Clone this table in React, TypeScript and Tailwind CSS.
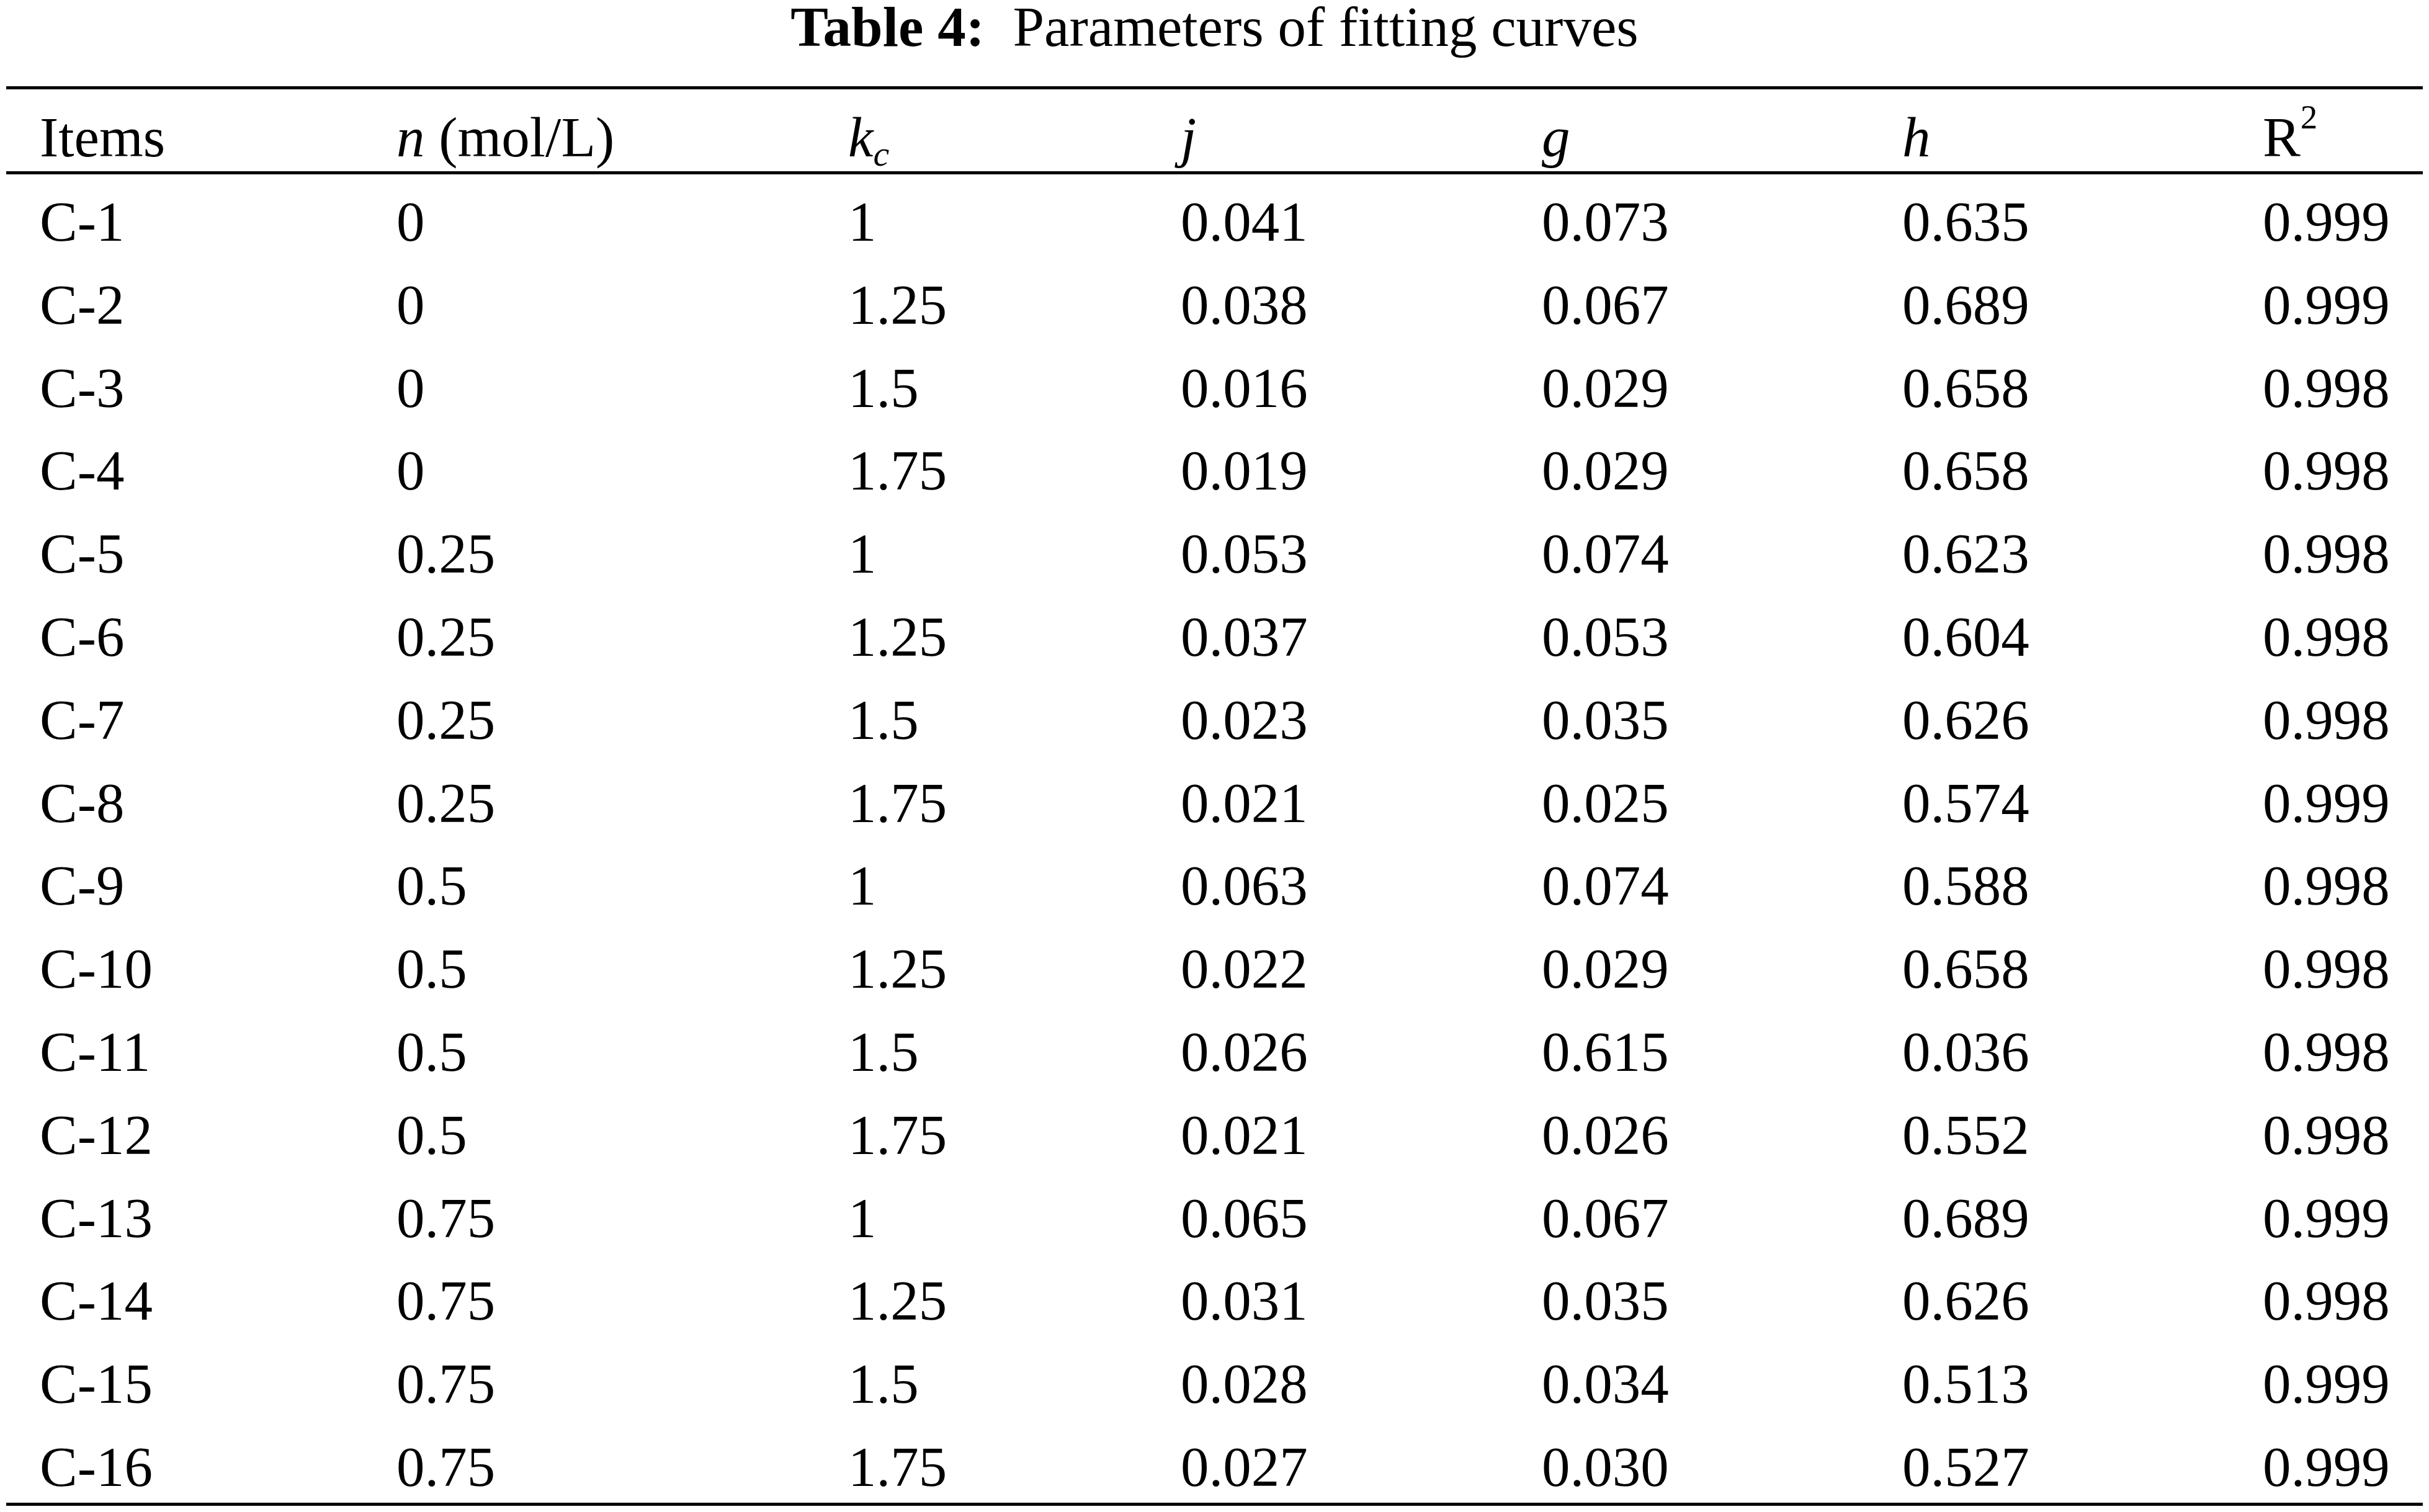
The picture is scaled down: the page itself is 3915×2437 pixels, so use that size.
import React from "react";

const rows: string[][] = [
  ["C-1", "0", "1", "0.041", "0.073", "0.635", "0.999"],
  ["C-2", "0", "1.25", "0.038", "0.067", "0.689", "0.999"],
  ["C-3", "0", "1.5", "0.016", "0.029", "0.658", "0.998"],
  ["C-4", "0", "1.75", "0.019", "0.029", "0.658", "0.998"],
  ["C-5", "0.25", "1", "0.053", "0.074", "0.623", "0.998"],
  ["C-6", "0.25", "1.25", "0.037", "0.053", "0.604", "0.998"],
  ["C-7", "0.25", "1.5", "0.023", "0.035", "0.626", "0.998"],
  ["C-8", "0.25", "1.75", "0.021", "0.025", "0.574", "0.999"],
  ["C-9", "0.5", "1", "0.063", "0.074", "0.588", "0.998"],
  ["C-10", "0.5", "1.25", "0.022", "0.029", "0.658", "0.998"],
  ["C-11", "0.5", "1.5", "0.026", "0.615", "0.036", "0.998"],
  ["C-12", "0.5", "1.75", "0.021", "0.026", "0.552", "0.998"],
  ["C-13", "0.75", "1", "0.065", "0.067", "0.689", "0.999"],
  ["C-14", "0.75", "1.25", "0.031", "0.035", "0.626", "0.998"],
  ["C-15", "0.75", "1.5", "0.028", "0.034", "0.513", "0.999"],
  ["C-16", "0.75", "1.75", "0.027", "0.030", "0.527", "0.999"],
];

const cols =
  "grid grid-cols-[629px_728px_536px_582px_581px_581px_258px]";

const App = () => {
  return (
    <div className="bg-white text-black min-h-screen w-[3915px] font-['Liberation_Serif','Times_New_Roman',serif] text-[91px]">
      <div className="text-center leading-[88px] mb-[51px] whitespace-pre">
        <span className="font-bold">Table 4:</span>
        {"  Parameters of fitting curves"}
      </div>

      <div className="ml-[10px] w-[3895px]">
        {/* header */}
        <div
          className={`${cols} border-t-[5px] border-b-[5px] border-black h-[142px] pt-[28px] leading-[100px]`}
        >
          <div className="pl-[54px]">Items</div>
          <div>
            <i>n</i> (mol/L)
          </div>
          <div>
            <i>k</i>
            <sub className="text-[58px]">
              <i>c</i>
            </sub>
          </div>
          <div>
            <i>j</i>
          </div>
          <div>
            <i>g</i>
          </div>
          <div>
            <i>h</i>
          </div>
          <div>
            R<sup className="text-[55px] top-[-45px]">2</sup>
          </div>
        </div>

        {/* body */}
        <div className="border-b-[5px] border-black">
          {rows.map((r) => (
            <div
              key={r[0]}
              className={`${cols} h-[133.8px] pt-[27px] leading-[100px]`}
            >
              <div className="pl-[54px]">{r[0]}</div>
              <div>{r[1]}</div>
              <div>{r[2]}</div>
              <div>{r[3]}</div>
              <div>{r[4]}</div>
              <div>{r[5]}</div>
              <div>{r[6]}</div>
            </div>
          ))}
        </div>
      </div>
    </div>
  );
};

export default App;
